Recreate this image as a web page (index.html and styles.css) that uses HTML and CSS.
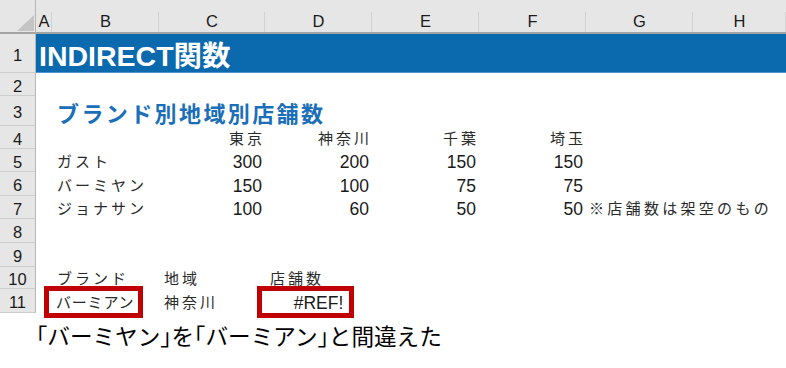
FILE: index.html
```html
<!DOCTYPE html>
<html lang="ja">
<head>
<meta charset="utf-8">
<link rel="stylesheet" href="styles.css">
</head>
<body>
<div class="wrap">
  <div class="sheet">
    <div class="corner"><span class="tri"></span></div>
    <div class="colhdr cA">A</div>
    <div class="colhdr cB">B</div>
    <div class="colhdr cC">C</div>
    <div class="colhdr cD">D</div>
    <div class="colhdr cE">E</div>
    <div class="colhdr cF">F</div>
    <div class="colhdr cG">G</div>
    <div class="colhdr cH">H</div>

    <div class="rowhdr r1">1</div>
    <div class="rowhdr r2">2</div>
    <div class="rowhdr r3">3</div>
    <div class="rowhdr r4">4</div>
    <div class="rowhdr r5">5</div>
    <div class="rowhdr r6">6</div>
    <div class="rowhdr r7">7</div>
    <div class="rowhdr r8">8</div>
    <div class="rowhdr r9">9</div>
    <div class="rowhdr r10">10</div>
    <div class="rowhdr r11">11</div>

    <div class="title r1">INDIRECT関数</div>
    <div class="subtitle r3">ブランド別地域別店舗数</div>

    <div class="cell jp right cC r4">東京</div>
    <div class="cell jp right cD r4">神奈川</div>
    <div class="cell jp right cE r4">千葉</div>
    <div class="cell jp right cF r4">埼玉</div>

    <div class="cell jp cB r5">ガスト</div>
    <div class="cell num cC r5">300</div>
    <div class="cell num cD r5">200</div>
    <div class="cell num cE r5">150</div>
    <div class="cell num cF r5">150</div>

    <div class="cell jp cB r6">バーミヤン</div>
    <div class="cell num cC r6">150</div>
    <div class="cell num cD r6">100</div>
    <div class="cell num cE r6">75</div>
    <div class="cell num cF r6">75</div>

    <div class="cell jp cB r7">ジョナサン</div>
    <div class="cell num cC r7">100</div>
    <div class="cell num cD r7">60</div>
    <div class="cell num cE r7">50</div>
    <div class="cell num cF r7">50</div>
    <div class="cell jp note r7">※店舗数は架空のもの</div>

    <div class="cell jp cB r10">ブランド</div>
    <div class="cell jp cC r10">地域</div>
    <div class="cell jp cD r10">店舗数</div>

    <div class="cell jp tight cB r11">バーミアン</div>
    <div class="cell jp cC r11">神奈川</div>
    <div class="cell num center cD r11">#REF!</div>
  </div>
  <div class="mark mark-brand"></div>
  <div class="mark mark-count"></div>
  <div class="caption">「バーミヤン」を「バーミアン」と間違えた</div>
</div>
</body>
</html>
```

FILE: styles.css
```css
html, body {
  margin: 0;
  padding: 0;
  background: #fff;
}

.wrap {
  position: relative;
  width: 786px;
  height: 368px;
  overflow: hidden;
}

.sheet {
  display: grid;
  grid-template-columns: 36px 16px 107px 106px 107px 107px 107px 107px 1fr;
  grid-template-rows: 34px 39px 23px 30px 23px 23px 24px 23px 24px 24px 22px 24px;
  font-family: "Liberation Sans", Arial, sans-serif;
  color: #1a1a1a;
}

/* headers */
.corner {
  grid-row: 1;
  grid-column: 1;
  background: #e6e6e6;
  border-bottom: 2px solid #a3a3a3;
  border-right: 1px solid #b5b5b5;
  box-sizing: border-box;
  display: flex;
  justify-content: flex-end;
  align-items: flex-end;
  padding: 0 1px 1px 0;
}
.tri {
  width: 17px;
  height: 16px;
  background: #c4c4c4;
  clip-path: polygon(100% 0, 100% 100%, 0 100%);
}

.colhdr {
  grid-row: 1;
  background:
    linear-gradient(#d2d2d2, #d2d2d2) right 12px / 1px calc(100% - 12px) no-repeat,
    #e6e6e6;
  border-bottom: 2px solid #a3a3a3;
  box-sizing: border-box;
  display: flex;
  justify-content: center;
  align-items: flex-end;
  font-size: 16.5px;
  line-height: 20px;
  padding-bottom: 1px;
  color: #1a1a1a;
}

.rowhdr {
  grid-column: 1;
  background: #e6e6e6;
  border-right: 1px solid #b5b5b5;
  border-bottom: 1px solid #cdcdcd;
  box-sizing: border-box;
  display: flex;
  justify-content: center;
  align-items: center;
  padding-top: 4px;
  font-size: 16.5px;
  color: #1a1a1a;
}

/* columns */
.cA { grid-column: 2; }
.cB { grid-column: 3; }
.cC { grid-column: 4; }
.cD { grid-column: 5; }
.cE { grid-column: 6; }
.cF { grid-column: 7; }
.cG { grid-column: 8; }
.cH { grid-column: 9; }

/* rows */
.r1 { grid-row: 2; }
.r2 { grid-row: 3; }
.r3 { grid-row: 4; }
.r4 { grid-row: 5; }
.r5 { grid-row: 6; }
.r6 { grid-row: 7; }
.r7 { grid-row: 8; }
.r8 { grid-row: 9; }
.r9 { grid-row: 10; }
.r10 { grid-row: 11; }
.r11 { grid-row: 12; }

.title {
  grid-column: 2 / -1;
  background: #0b69ae;
  border-bottom: 1px solid #4f97d2;
  box-sizing: border-box;
  color: #fff;
  font-family: "Liberation Sans", "Noto Sans CJK JP", sans-serif;
  font-weight: bold;
  font-size: 28.5px;
  display: flex;
  align-items: center;
  padding-left: 3px;
  padding-top: 1px;
}

.subtitle {
  grid-column: 3 / -1;
  color: #1b6fb8;
  font-family: "Noto Sans CJK JP", sans-serif;
  font-weight: bold;
  font-size: 22px;
  letter-spacing: 2.4px;
  display: flex;
  align-items: center;
  padding-left: 5px;
  padding-top: 1px;
}

.cell {
  display: flex;
  align-items: flex-end;
  white-space: nowrap;
  line-height: 20px;
  color: #1a1a1a;
}

.jp {
  font-family: "Noto Sans CJK JP", sans-serif;
  font-size: 15px;
  letter-spacing: 3px;
  padding-left: 5px;
  color: #2a2a2a;
  padding-bottom: 1px;
}

.tight {
  letter-spacing: 0.8px;
  padding-left: 4px;
}

.num {
  font-family: "Liberation Sans", Arial, sans-serif;
  font-size: 17.5px;
  justify-content: flex-end;
  padding-right: 3px;
}

.right {
  justify-content: flex-end;
  padding-left: 0;
  padding-right: 0;
}

.center {
  justify-content: center;
  padding-right: 0;
}

.note {
  grid-column: 8 / -1;
  padding-left: 3px;
  letter-spacing: 3.3px;
}

/* red highlight boxes */
.mark {
  position: absolute;
  border: 5px solid #c00000;
  box-sizing: border-box;
  height: 32px;
  top: 286px;
}
.mark-brand {
  left: 44px;
  width: 99px;
}
.mark-count {
  left: 257px;
  width: 97px;
}

.caption {
  font-family: "Noto Sans CJK JP", sans-serif;
  font-size: 22.6px;
  font-feature-settings: "halt";
  line-height: 46px;
  color: #000;
  padding-left: 36px;
  white-space: nowrap;
}
```
